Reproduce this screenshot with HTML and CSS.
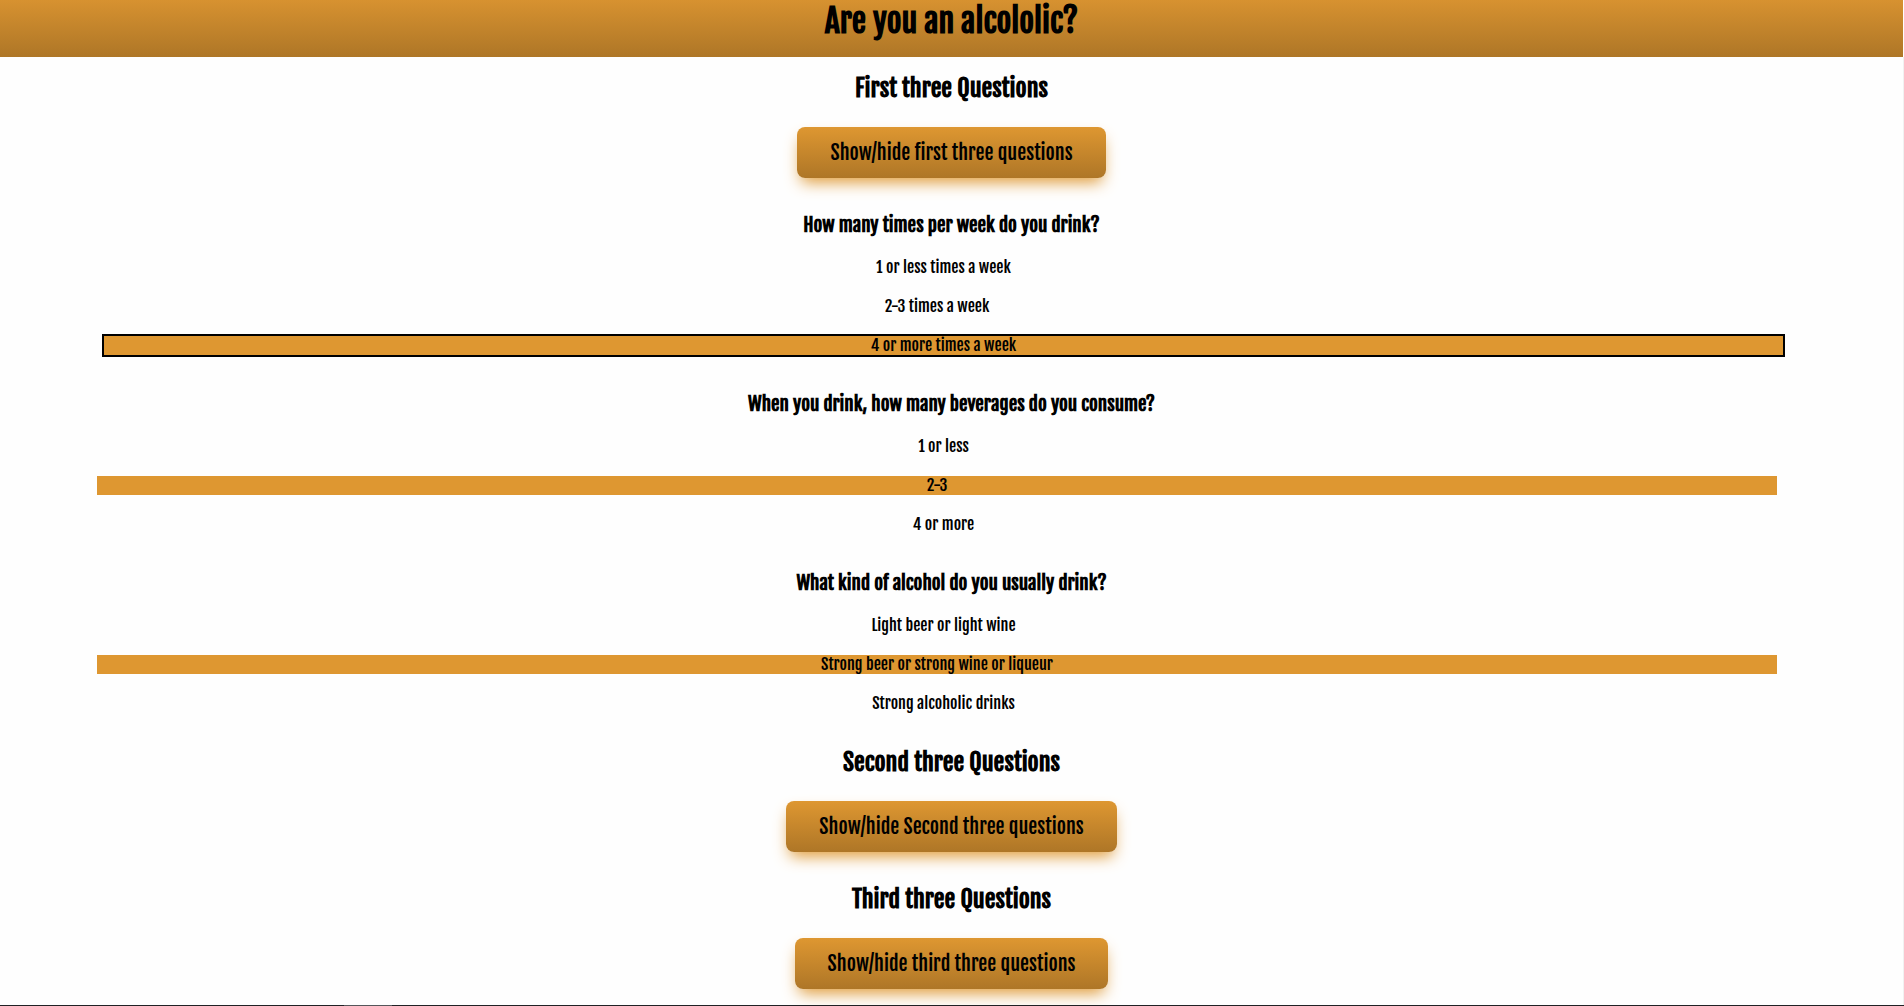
FILE: index.html
```html
<!DOCTYPE html>
<html lang="en">
<head>
<meta charset="utf-8">
<meta name="viewport" content="width=device-width, initial-scale=1">
<title>Are you an alcololic?</title>
<link rel="stylesheet" href="styles.css">
</head>
<body>
<header class="banner"><h1>Are you an alcololic?</h1></header>
<main>
  <section class="group">
    <h2>First three Questions</h2>
    <button class="toggle" type="button">Show/hide first three questions</button>
    <form class="questions">
      <section class="question">
        <h3>How many times per week do you drink?</h3>
        <div class="options">
          <label class="option"><input type="radio" name="times">1 or less times a week</label>
          <label class="option"><input type="radio" name="times">2-3 times a week</label>
          <label class="option current"><input type="radio" name="times" checked>4 or more times a week</label>
        </div>
      </section>
      <section class="question">
        <h3>When you drink, how many beverages do you consume?</h3>
        <div class="options">
          <label class="option"><input type="radio" name="amount">1 or less</label>
          <label class="option"><input type="radio" name="amount" checked>2-3</label>
          <label class="option"><input type="radio" name="amount">4 or more</label>
        </div>
      </section>
      <section class="question">
        <h3>What kind of alcohol do you usually drink?</h3>
        <div class="options">
          <label class="option"><input type="radio" name="kind">Light beer or light wine</label>
          <label class="option"><input type="radio" name="kind" checked>Strong beer or strong wine or liqueur</label>
          <label class="option"><input type="radio" name="kind">Strong alcoholic drinks</label>
        </div>
      </section>
    </form>
  </section>
  <section class="group">
    <h2>Second three Questions</h2>
    <button class="toggle" type="button">Show/hide Second three questions</button>
  </section>
  <section class="group">
    <h2>Third three Questions</h2>
    <button class="toggle" type="button">Show/hide third three questions</button>
  </section>
</main>
<footer class="edge"><div class="edge-mark"></div></footer>
</body>
</html>
```
FILE: styles.css
```css
* { box-sizing: border-box; }
body {
  margin: 0;
  min-height: 100vh;
  display: flex;
  flex-direction: column;
  background: #fefefe;
  color: #000;
  font-family: "Fjalla One", "Liberation Sans Narrow", "Liberation Sans", sans-serif;
  text-align: center;
}
h1, h2, h3 { margin: 0; font-weight: bold; }
h1 { font-size: 32px; line-height: 42px; }
h2 { font-size: 24px; line-height: 30px; }
h3 { font-size: 19px; line-height: 24px; }
.banner {
  height: 57px;
  margin-right: 1px;
  background: linear-gradient(#d79230, #ae7627);
}
main {
  display: flex;
  flex-direction: column;
  gap: 32px;
  padding: 16px 0;
  border-right: 1px solid #f1f1f1;
}
.toggle {
  margin-top: 24px;
  height: 51px;
  padding: 0 33px;
  border: 0;
  border-radius: 8px;
  background: linear-gradient(#de9731, #ae7627);
  box-shadow: 0 8px 16px -4px #de9731;
  color: #000;
  font: inherit;
  font-size: 20px;
  cursor: pointer;
}
.group { display: flex; flex-direction: column; align-items: center; }
.questions {
  align-self: stretch;
  display: flex;
  flex-direction: column;
  gap: 37px;
  padding: 35px 0 2px;
}
.options {
  display: flex;
  flex-direction: column;
  gap: 20px;
  margin-top: 21px;
  padding: 0 120px 0 104px;
}
.option { height: 19px; font-size: 16px; line-height: 19px; cursor: pointer; }
.option:nth-child(2) { margin: 0 6px 0 -7px; }
.option input { position: absolute; margin: 0; opacity: 0; }
.option:has(input:checked) { background: #de9731; }
.current { outline: 2px solid #000; }
.edge { margin-top: auto; height: 1px; background: #202124; }
.edge-mark { width: 48px; height: 1px; margin-left: 344px; background: #55565a; }
```
